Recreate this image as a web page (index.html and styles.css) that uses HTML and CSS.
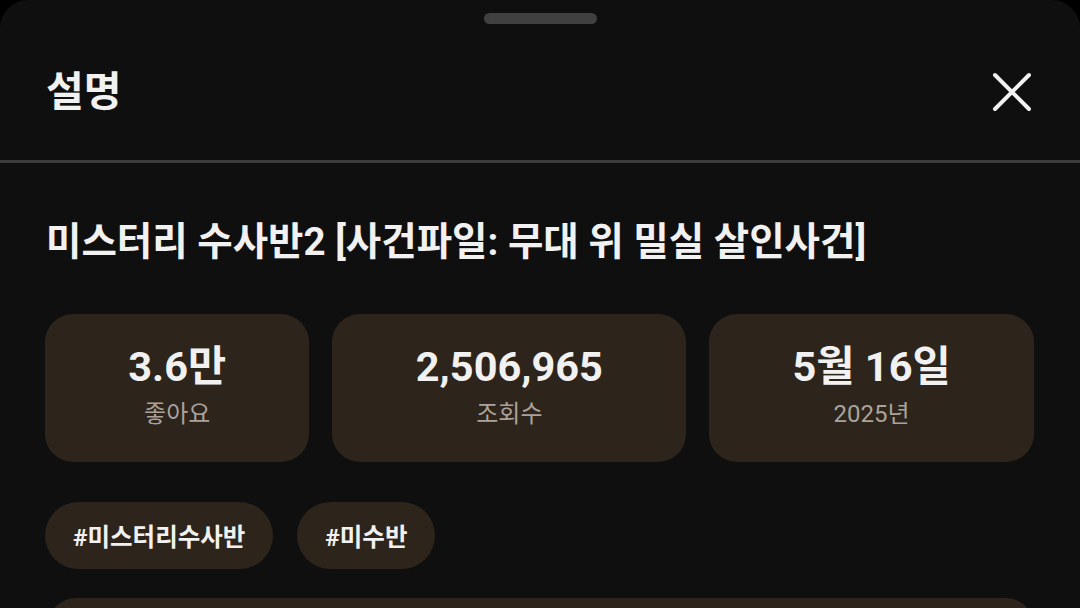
FILE: index.html
```html
<!DOCTYPE html>
<html lang="ko">
<head>
<meta charset="UTF-8" />
<meta name="viewport" content="width=device-width, initial-scale=1" />
<title>설명</title>
<link rel="stylesheet" href="styles.css">
</head>
<body>

<div class="sheet">
  <div class="handle-wrap">
    <div class="handle"></div>
  </div>

  <header class="sheet-head">
    <h1>설명</h1>
    <button class="close-btn" aria-label="닫기">
      <svg width="40" height="40" viewBox="0 0 40 40">
        <path d="M3 3 L37 37 M37 3 L3 37" stroke="#f1f1f1" stroke-width="4" stroke-linecap="round" fill="none" />
      </svg>
    </button>
  </header>

  <main class="content">
    <h2 class="video-title">미스터리 수사반2 [사건파일: 무대 위 밀실 살인사건]</h2>

    <div class="stats">
      <div class="stat">
        <div class="stat-value">3.6만</div>
        <div class="stat-label">좋아요</div>
      </div>
      <div class="stat">
        <div class="stat-value">2,506,965</div>
        <div class="stat-label">조회수</div>
      </div>
      <div class="stat">
        <div class="stat-value">5월 16일</div>
        <div class="stat-label">2025년</div>
      </div>
    </div>

    <div class="tags">
      <span class="tag">#미스터리수사반</span>
      <span class="tag">#미수반</span>
    </div>

    <div class="desc-box"></div>
  </main>
</div>

</body>
</html>
```

FILE: styles.css
```css
:root {
  --bg: #000;
  --sheet-bg: #0f0f0f;
  --card-bg: #2d241b;
  --text: #f1f1f1;
  --text-sub: #aaa29b;
  --line: #3d3d3d;
}

html, body {
  margin: 0;
  height: 100%;
  overflow: hidden;
}

body {
  background-color: var(--bg);
  color: var(--text);
  font-family: Roboto, "Noto Sans CJK KR", sans-serif;
}

.sheet {
  height: 100vh;
  overflow: hidden;
  background-color: var(--sheet-bg);
  border-radius: 28px 28px 0 0;
}

.handle-wrap {
  display: flex;
  justify-content: center;
  padding-top: 13px;
}

.handle {
  width: 113px;
  height: 11px;
  border-radius: 6px;
  background-color: #404040;
}

.sheet-head {
  height: 136px;
  display: flex;
  align-items: center;
  justify-content: space-between;
  padding: 0 48px 0 46px;
  border-bottom: 3px solid var(--line);
}

.sheet-head h1 {
  margin: 0;
  font-size: 41px;
  font-weight: 700;
  line-height: 1;
}

.close-btn {
  background: none;
  border: none;
  padding: 0;
  width: 40px;
  height: 40px;
  display: flex;
  cursor: pointer;
}

.content {
  padding: 0 46px 0 45px;
}

.video-title {
  margin: 54px 0 0 1px;
  font-size: 38.5px;
  font-weight: 700;
  line-height: 50px;
  white-space: nowrap;
}

.stats {
  display: flex;
  gap: 23px;
  margin-top: 47px;
}

.stat {
  flex: 1 1 auto;
  height: 148px;
  box-sizing: border-box;
  padding-top: 29px;
  border-radius: 28px;
  background-color: var(--card-bg);
  text-align: center;
}

.stat-value {
  font-size: 41.5px;
  font-weight: 700;
  line-height: 48px;
}

.stat-label {
  margin-top: 8px;
  font-size: 24px;
  line-height: 30px;
  color: var(--text-sub);
}

.tags {
  display: flex;
  gap: 24px;
  margin-top: 40px;
}

.tag {
  height: 67px;
  display: flex;
  align-items: center;
  padding: 0 28px;
  border-radius: 34px;
  background-color: var(--card-bg);
  font-size: 24.5px;
  font-weight: 700;
}

.desc-box {
  margin: 29px 0 0 3px;
  height: 200px;
  border-radius: 28px;
  background-color: var(--card-bg);
}
```
